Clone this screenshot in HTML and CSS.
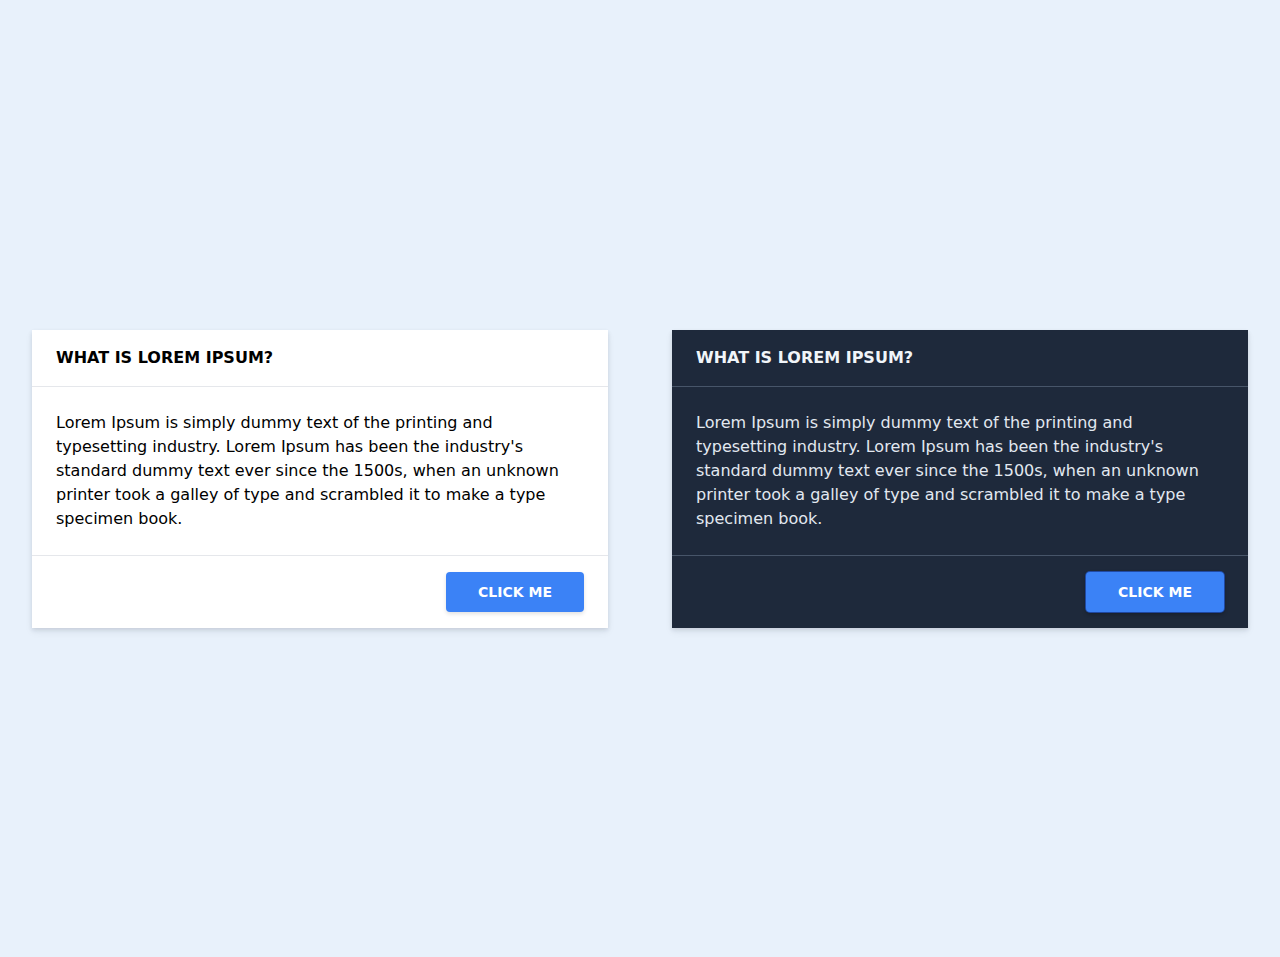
FILE: index.html
```html
<!DOCTYPE html>
<html lang="en">
<head>
<meta charset="utf-8">
<title>Cards</title>
<link rel="stylesheet" href="styles.css">
</head>
<body>
<main class="page">
  <section class="card card-light">
    <header class="card-header"><h2 class="card-title">What is Lorem Ipsum?</h2></header>
    <div class="card-body">
      <p>Lorem Ipsum is simply dummy text of the printing and typesetting industry. Lorem Ipsum has been the industry's standard dummy text ever since the 1500s, when an unknown printer took a galley of type and scrambled it to make a type specimen book.</p>
    </div>
    <footer class="card-footer"><button class="btn">Click me</button></footer>
  </section>
  <section class="card card-dark">
    <header class="card-header"><h2 class="card-title">What is Lorem Ipsum?</h2></header>
    <div class="card-body">
      <p>Lorem Ipsum is simply dummy text of the printing and typesetting industry. Lorem Ipsum has been the industry's standard dummy text ever since the 1500s, when an unknown printer took a galley of type and scrambled it to make a type specimen book.</p>
    </div>
    <footer class="card-footer"><button class="btn">Click me</button></footer>
  </section>
</main>
</body>
</html>
```
FILE: styles.css
```css
html, body {
  margin: 0;
  padding: 0;
}
body {
  background: #e8f1fb;
  font-family: "DejaVu Sans", sans-serif;
  font-size: 16px;
  line-height: 24px;
}
.page {
  min-height: 957px;
  display: flex;
  align-items: center;
  justify-content: space-between;
  padding: 0 32px;
  box-sizing: border-box;
  gap: 64px;
}
.card {
  flex: 1 1 0;
  box-shadow: 0 2px 4px rgba(30, 41, 59, 0.12), 0 4px 8px rgba(30, 41, 59, 0.06);
}
.card-light {
  background: #ffffff;
  color: #000000;
  --line: #e5e7eb;
}
.card-dark {
  background: #1e293b;
  color: #e2e8f0;
  --line: #475569;
}
.card-header {
  padding: 16px 24px;
  border-bottom: 1px solid var(--line);
}
.card-title {
  margin: 0;
  font-size: 16px;
  line-height: 24px;
  font-weight: bold;
  text-transform: uppercase;
}
.card-light .card-title { color: #000000; }
.card-dark .card-title { color: #f1f5f9; }
.card-body {
  padding: 24px;
  border-bottom: 1px solid var(--line);
}
.card-body p {
  margin: 0;
}
.card-footer {
  padding: 16px 24px;
  display: flex;
  justify-content: flex-end;
}
.btn {
  font-family: "DejaVu Sans", sans-serif;
  font-size: 14px;
  line-height: 20px;
  font-weight: bold;
  text-transform: uppercase;
  color: #ffffff;
  background: #3b82f6;
  border: 0;
  border-radius: 4px;
  padding: 10px 32px;
  box-shadow: 0 2px 4px rgba(0, 0, 0, 0.12);
}
.card-dark .btn {
  box-shadow: 0 0 0 1px rgba(37, 99, 235, 0.6), 0 2px 4px rgba(0, 0, 0, 0.3);
}
```
